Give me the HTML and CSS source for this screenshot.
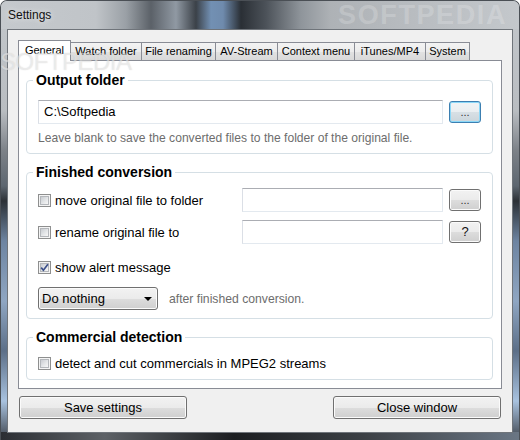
FILE: index.html
```html
<!DOCTYPE html>
<html>
<head>
<meta charset="utf-8">
<title>Settings</title>
<link rel="stylesheet" href="styles.css">
</head>
<body>
<div class="window">
  <div class="titlebar">
    <span class="title">Settings</span>
    <span class="tb-mark">SOFTPEDIA</span>
  </div>
  <div class="client">
    <div class="mark">SOFTPEDIA</div>
    <div class="tabs">
      <div class="tab sel w1">General</div>
      <div class="tab w2">Watch folder</div>
      <div class="tab w3">File renaming</div>
      <div class="tab w4">AV-Stream</div>
      <div class="tab w5">Context menu</div>
      <div class="tab w6">iTunes/MP4</div>
      <div class="tab w7">System</div>
    </div>
    <div class="panel">
      <fieldset class="group g1">
        <legend>Output folder</legend>
        <div class="row">
          <div class="textbox full">C:\Softpedia</div>
          <button class="btn small focus">...</button>
        </div>
        <div class="hint">Leave blank to save the converted files to the folder of the original file.</div>
      </fieldset>

      <fieldset class="group g2">
        <legend>Finished conversion</legend>
        <div class="row">
          <label class="check"><span class="cb"><span class="cb-in"></span></span>move original file to folder</label>
          <div class="textbox half"></div>
          <button class="btn small">...</button>
        </div>
        <div class="row r2">
          <label class="check"><span class="cb"><span class="cb-in"></span></span>rename original file to</label>
          <div class="textbox half"></div>
          <button class="btn small q">?</button>
        </div>
        <div class="row r3">
          <label class="check"><span class="cb"><span class="cb-in"><svg class="tick" viewBox="0 0 9 9" width="9" height="9"><path d="M1.2 4.6 L3.4 7.2 L7.9 1.3" fill="none" stroke="#3b4f8a" stroke-width="1.7"/></svg></span></span>show alert message</label>
        </div>
        <div class="row r4">
          <div class="select"><span>Do nothing</span><span class="arrow"></span></div>
          <span class="after">after finished conversion.</span>
        </div>
      </fieldset>

      <fieldset class="group g3">
        <legend>Commercial detection</legend>
        <div class="row r5">
          <label class="check"><span class="cb"><span class="cb-in"></span></span>detect and cut commercials in MPEG2 streams</label>
        </div>
      </fieldset>
    </div>
    <div class="actions">
      <button class="btn big">Save settings</button>
      <button class="btn big">Close window</button>
    </div>
  </div>
</div>
</body>
</html>
```

FILE: styles.css
```css
* { box-sizing: border-box; }
html, body { margin: 0; padding: 0; background: #ffffff; }
body { font-family: "Liberation Sans", Arial, sans-serif; color: #000; }

.window {
  width: 520px;
  height: 440px;
  border-radius: 7px 7px 0 0;
  overflow: hidden;
  border: 1px solid #4a4f55;
  border-bottom: none;
  display: flex;
  flex-direction: column;
  background:
    linear-gradient(90deg, #2b2e33 0%, #5d6166 20%, #1c1e21 45%, #3c4045 70%, #6a7684 100%) left bottom / 100% 8px no-repeat,
    linear-gradient(to bottom, #c3c7cb 0px, #b9bdc1 110px, #7c8187 150px, #5d6670 185px, #2c3136 200px, #6d84a1 240px, #8fa6c2 300px, #5c6f88 350px, #a8c2df 400px, #3b4048 440px);
}

.titlebar {
  height: 28px;
  display: flex;
  align-items: center;
  padding-left: 7px;
  overflow: hidden;
  background: linear-gradient(90deg, #c5c9cd 0px, #c0c4c8 95px, #9aa0a6 125px, #5b6168 150px, #9099a3 175px, #3b4148 195px, #7290b3 210px, #6f8bad 222px, #2a2f35 240px, #4c5259 265px, #8f959b 300px, #aeb2b6 330px, #b9bdc1 420px, #c4c8cc 520px);
}
.title {
  font-size: 12px;
  color: #111;
  text-shadow: 0 0 6px rgba(255,255,255,0.8);
}
.tb-mark {
  margin-left: auto;
  margin-right: 12px;
  font-size: 27px;
  font-weight: bold;
  letter-spacing: 1.6px;
  color: rgba(255,255,255,0.2);
  line-height: 27px;
}

.client {
  position: relative;
  margin: 0 6px;
  height: 404px;
  background: #f0f0f0;
  border: 1px solid #6f747a;
  padding: 10px 10px 0 10px;
}
.mark {
  position: absolute;
  left: -8px;
  top: 18px;
  font-size: 24px;
  letter-spacing: -0.5px;
  color: rgba(255,255,255,0.45);
  text-shadow: 0 0 1px rgba(140,140,140,0.35);
  z-index: 3;
  pointer-events: none;
}

.tabs {
  display: flex;
  align-items: flex-end;
  height: 20px;
  position: relative;
  z-index: 2;
}
.tab {
  height: 18px;
  border: 1px solid #898c95;
  border-bottom: none;
  margin-left: -1px;
  font-size: 11px;
  line-height: 16px;
  text-align: center;
  white-space: nowrap;
  background: linear-gradient(to bottom, #f3f3f3 0%, #ececec 50%, #e2e2e2 51%, #d9d9d9 100%);
}
.tab.sel {
  margin-left: 0;
  height: 21px;
  margin-bottom: -1px;
  background: #ffffff;
  line-height: 19px;
  position: relative;
  z-index: 2;
}
.w1 { width: 53px; }
.w2 { width: 72px; }
.w3 { width: 75px; }
.w4 { width: 63px; }
.w5 { width: 78px; }
.w6 { width: 72px; }
.w7 { width: 45px; }

.panel {
  height: 329px;
  background: #ffffff;
  border: 1px solid #898c95;
  padding: 11px 8px 0 7px;
}

.group {
  margin: 0;
  border: 1px solid #d5dfe5;
  border-radius: 4px;
  padding: 12px 11px 7px 11px;
  min-width: 0;
}
.group legend {
  font-size: 14px;
  font-weight: bold;
  line-height: 16px;
  padding: 0 3px;
  margin-left: -5px;
}
.g2 { margin-top: 10px; padding-top: 8px; padding-bottom: 8px; }
.g3 { margin-top: 10px; padding-top: 8px; padding-bottom: 6px; }

.row {
  display: flex;
  align-items: center;
  height: 24px;
}
.r2 { margin-top: 8px; }
.r3 { margin-top: 13px; height: 20px; }
.r4 { margin-top: 10px; height: 23px; }
.r5 { height: 20px; }

.textbox {
  height: 24px;
  background: #fff;
  border: 1px solid #e3e9ef;
  border-top-color: #abadb3;
  border-left-color: #dbdfe6;
  font-size: 13px;
  line-height: 22px;
  padding-left: 5px;
}
.textbox.full { width: 405px; }
.textbox.half { width: 201px; }

.btn {
  font-family: "Liberation Sans", Arial, sans-serif;
  color: #000;
  border: 1px solid #707070;
  border-radius: 3px;
  background: linear-gradient(to bottom, #f2f2f2 0%, #ebebeb 50%, #dddddd 51%, #cfcfcf 100%);
  box-shadow: inset 0 0 0 1px #fbfbfb;
  padding: 0;
  margin: 0;
}
.btn.small {
  width: 32px;
  height: 22px;
  margin-left: 6px;
  font-size: 11px;
  line-height: 18px;
  color: #333;
}
.btn.q { font-size: 13px; color: #111; }
.btn.focus {
  border-color: #3c7fb1;
  box-shadow: inset 0 0 0 1px #8bd8f8;
  background: linear-gradient(to bottom, #f1f4f6 0%, #e9eef1 50%, #d8e0e5 51%, #cbd5db 100%);
}
.btn.big {
  width: 168px;
  height: 23px;
  font-size: 13px;
}

.hint {
  margin-top: 6px;
  font-size: 12.1px;
  line-height: 16px;
  color: #6d6d6d;
  white-space: nowrap;
}

.check {
  flex: 1;
  display: flex;
  align-items: center;
  font-size: 13px;
  white-space: nowrap;
}
.cb {
  width: 13px;
  height: 13px;
  border: 1px solid #8e8f8f;
  background: #f4f4f4;
  padding: 1px;
  margin-right: 4px;
  flex: none;
}
.cb-in {
  display: block;
  width: 9px;
  height: 9px;
  border: 1px solid #b4b7bb;
  background: linear-gradient(135deg, #c9ccd1 0%, #e4e6e8 55%, #f7f7f7 100%);
}
.tick {
  display: block;
  margin: -1px 0 0 -1px;
}

.select {
  width: 120px;
  height: 23px;
  border: 1px solid #707070;
  border-radius: 3px;
  background: linear-gradient(to bottom, #f2f2f2 0%, #ebebeb 50%, #dddddd 51%, #cfcfcf 100%);
  box-shadow: inset 0 0 0 1px #fbfbfb;
  display: flex;
  align-items: center;
  justify-content: space-between;
  padding: 0 4px 0 3px;
  font-size: 13px;
}
.arrow {
  width: 0;
  height: 0;
  border-left: 4px solid transparent;
  border-right: 4px solid transparent;
  border-top: 4px solid #000;
  margin-right: 1px;
}
.after {
  margin-left: 11px;
  font-size: 12.2px;
  color: #6d6d6d;
}

.actions {
  display: flex;
  justify-content: space-between;
  margin-top: 7px;
  padding: 0 1px 0 1px;
}
```
